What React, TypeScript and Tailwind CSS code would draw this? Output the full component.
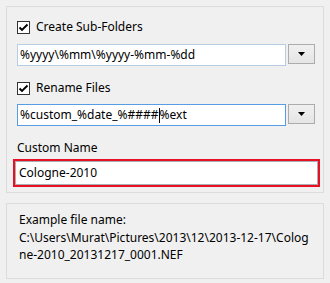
import React from 'react';

const font = { fontFamily: '"Segoe UI", "Noto Sans", sans-serif' };

const Check = () => (
    <span className="flex h-[13px] w-[13px] shrink-0 items-center justify-center border border-[#333333] bg-white">
        <svg width="11" height="11" viewBox="0 0 11 11">
            <path d="M1.5 5.5 L4 8 L9.5 2.5" fill="none" stroke="#000" strokeWidth="1.9" />
        </svg>
    </span>
);

const DropButton = () => (
    <button className="flex h-[20px] w-[27px] shrink-0 items-center justify-center border border-[#acacac] bg-gradient-to-b from-[#f0f0f0] to-[#e5e5e5]">
        <svg width="7" height="4" viewBox="0 0 7 4">
            <path d="M0 0 H7 L3.5 4 Z" fill="#000" />
        </svg>
    </button>
);

export default function App() {
    return (
        <div className="h-[283px] w-[330px] overflow-hidden bg-[#f0f0f0] pt-[6px] pl-[6px] text-[12px] text-black" style={font}>
            <div className="flex h-[187px] w-[318px] flex-col border border-[#dcdcdc] pl-[10px] pr-[7px] pt-[12px]">
                <div className="flex h-[16px] items-center gap-[6px]">
                    <Check />
                    <span>Create Sub-Folders</span>
                </div>
                <div className="mt-[9px] flex items-start gap-[2px]">
                    <div className="flex h-[22px] w-[269px] items-center border border-[#b7cde4] bg-white pl-[2px]">
                        %yyyy\%mm\%yyyy-%mm-%dd
                    </div>
                    <DropButton />
                </div>
                <div className="mt-[14px] flex h-[16px] items-center gap-[6px]">
                    <Check />
                    <span>Rename Files</span>
                </div>
                <div className="mt-[8px] flex items-start gap-[2px]">
                    <div className="flex h-[22px] w-[269px] items-center border border-[#569de5] bg-white pl-[2px]">
                        <span>%custom_%date_%####</span>
                        <span className="h-[15px] w-px bg-black" />
                        <span>%ext</span>
                    </div>
                    <DropButton />
                </div>
                <div className="mt-[14px] flex h-[16px] items-center">Custom Name</div>
                <div className="-ml-[4px] mt-[3px] h-[28px] w-[307px] border-2 border-[#e81123]">
                    <div className="flex h-full w-full items-center border border-[#abadb3] bg-white pl-[3px]">
                        Cologne-2010
                    </div>
                </div>
            </div>
            <div className="mt-[10px] h-[76px] w-[318px] border border-[#dcdcdc] pl-[12px] pt-[7px] leading-[17.5px]">
                <div className="whitespace-nowrap">Example file name:</div>
                <div className="whitespace-nowrap">C:\Users\Murat\Pictures\2013\12\2013-12-17\Colog</div>
                <div className="whitespace-nowrap">ne-2010_20131217_0001.NEF</div>
            </div>
        </div>
    );
}
